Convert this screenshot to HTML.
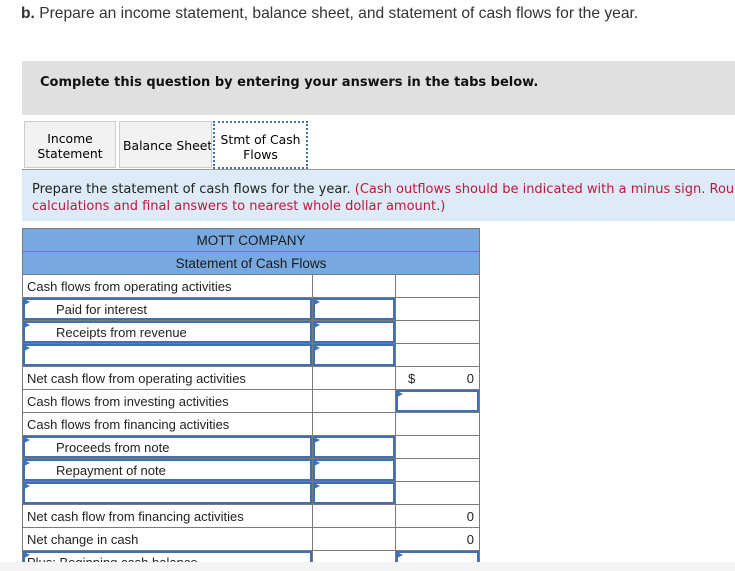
<!DOCTYPE html>
<html style="overflow:hidden"><head><style>
html,body{margin:0;width:735px;height:571px;overflow:hidden}
body{background:#fff;position:relative;font-family:"Liberation Sans",Arial,sans-serif}
.a{position:absolute}
.v{font-family:"DejaVu Sans",Verdana,sans-serif;font-size:12.4px;white-space:nowrap}
table{position:absolute;left:22px;top:228px;border-collapse:collapse;table-layout:fixed;font-size:13px;color:#222}
td{border:1px solid #7a7a7a;height:22px;padding:0;position:relative;white-space:nowrap;overflow:hidden}
td.h{background:#77a9e0;text-align:center;font-size:13.5px;color:#1a1a1a}
.t{padding-left:4px}
.in{position:absolute;left:0;top:0;right:0;bottom:0;border:2px solid #3f70b3}
.in:before{content:"";position:absolute;left:-1px;top:-1px;border-left:6px solid #3f70b3;border-top:3px solid transparent;border-bottom:3px solid transparent;}
.in span{position:absolute;left:31px;top:2px}
.r{text-align:right;padding-right:5px}
</style></head><body>
<div class="a" style="left:21px;top:5px;font-size:15.6px;color:#333;white-space:nowrap"><b>b.</b> Prepare an income statement, balance sheet, and statement of cash flows for the year.</div>
<div class="a" style="left:22px;top:61px;width:713px;height:54px;background:#e0e0e0"></div>
<div class="a v" style="left:40px;top:75px;font-weight:bold;color:#111;font-size:13px">Complete this question by entering your answers in the tabs below.</div>
<div class="a v" style="left:24px;top:121px;width:92px;height:47px;background:#f2f2f2;border:1px solid #ccc;text-align:center;line-height:15px;padding-top:9px;box-sizing:border-box">Income<br>Statement</div>
<div class="a v" style="left:119px;top:121px;width:93px;height:47px;background:#f2f2f2;border:1px solid #ccc;line-height:47px;box-sizing:border-box;padding-left:3px;overflow:hidden">Balance Sheet</div>
<div class="a v" style="left:213px;top:121px;width:95px;height:48px;background:#fff;border:2px dotted #3f70b3;text-align:center;line-height:15px;padding-top:9px;box-sizing:border-box">Stmt of Cash<br>Flows</div>
<div class="a" style="left:22px;top:169px;width:713px;height:52px;background:#ddebf8;border-top:1px solid #999;box-sizing:border-box;overflow:hidden">
<div class="a v" style="left:10px;top:11px;line-height:17px;color:#222;font-size:13px">Prepare the statement of cash flows for the year. <span style="color:#c0163a">(Cash outflows should be indicated with a minus sign. Round your<br>calculations and final answers to nearest whole dollar amount.)</span></div>
</div>
<table>
<colgroup><col style="width:290px"><col style="width:83px"><col style="width:84px"></colgroup>
<tr><td class="h" colspan="3">MOTT COMPANY</td></tr>
<tr><td class="h" colspan="3">Statement of Cash Flows</td></tr>
<tr><td class="t">Cash flows from operating activities</td><td></td><td></td></tr>
<tr><td><div class="in"><span>Paid for interest</span></div></td><td><div class="in"></div></td><td></td></tr>
<tr><td><div class="in"><span>Receipts from revenue</span></div></td><td><div class="in"></div></td><td></td></tr>
<tr><td><div class="in"></div></td><td><div class="in"></div></td><td></td></tr>
<tr><td class="t">Net cash flow from operating activities</td><td></td><td class="r"><span style="float:left;padding-left:12px">$</span>0</td></tr>
<tr><td class="t">Cash flows from investing activities</td><td></td><td><div class="in"></div></td></tr>
<tr><td class="t">Cash flows from financing activities</td><td></td><td></td></tr>
<tr><td><div class="in"><span>Proceeds from note</span></div></td><td><div class="in"></div></td><td></td></tr>
<tr><td><div class="in"><span>Repayment of note</span></div></td><td><div class="in"></div></td><td></td></tr>
<tr><td><div class="in"></div></td><td><div class="in"></div></td><td></td></tr>
<tr><td class="t">Net cash flow from financing activities</td><td></td><td class="r">0</td></tr>
<tr><td class="t">Net change in cash</td><td></td><td class="r">0</td></tr>
<tr><td><div class="in"><span style="left:2px">Plus: Beginning cash balance</span></div></td><td></td><td><div class="in"></div></td></tr>
</table>
<div class="a" style="left:0;top:562px;width:735px;height:9px;background:#f4f4f4;z-index:5"></div>
</body></html>
